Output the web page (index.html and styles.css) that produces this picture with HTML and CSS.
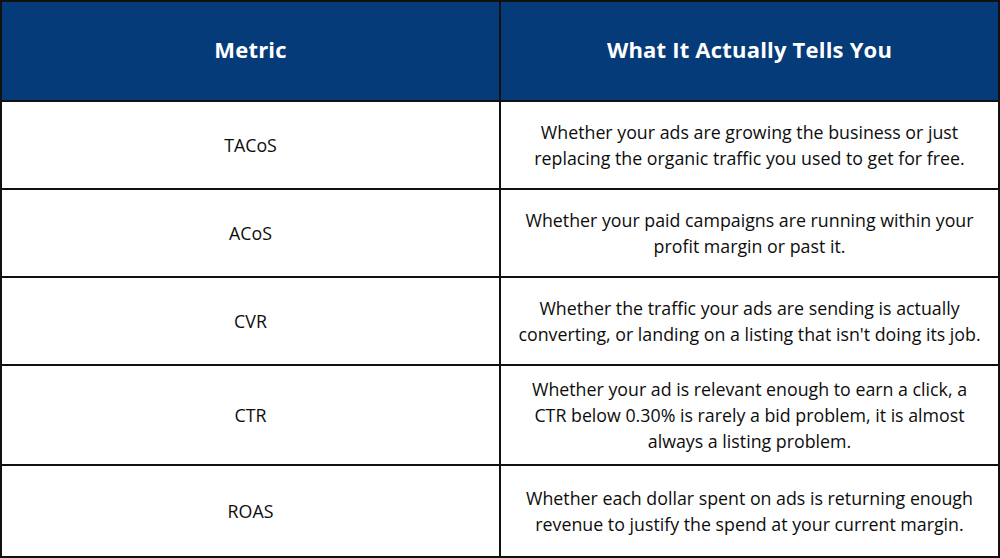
FILE: index.html
```html
<!DOCTYPE html>
<html>
<head>
<meta charset="utf-8">
<link rel="stylesheet" href="styles.css">
</head>
<body>
<table class="metrics">
  <thead>
    <tr class="head-row">
      <th class="col-metric">Metric</th>
      <th class="col-desc">What It Actually Tells You</th>
    </tr>
  </thead>
  <tbody>
    <tr class="row-a">
      <td>TACoS</td>
      <td>Whether your ads are growing the business or just<br>replacing the organic traffic you used to get for free.</td>
    </tr>
    <tr class="row-a">
      <td>ACoS</td>
      <td>Whether your paid campaigns are running within your<br>profit margin or past it.</td>
    </tr>
    <tr class="row-a">
      <td>CVR</td>
      <td>Whether the traffic your ads are sending is actually<br>converting, or landing on a listing that isn't doing its job.</td>
    </tr>
    <tr class="row-b">
      <td>CTR</td>
      <td>Whether your ad is relevant enough to earn a click, a<br>CTR below 0.30% is rarely a bid problem, it is almost<br>always a listing problem.</td>
    </tr>
    <tr class="row-c">
      <td>ROAS</td>
      <td>Whether each dollar spent on ads is returning enough<br>revenue to justify the spend at your current margin.</td>
    </tr>
  </tbody>
</table>
</body>
</html>
```
FILE: styles.css
```css
html, body {
  margin: 0;
  padding: 0;
  background: #ffffff;
}
.metrics {
  width: 1000px;
  height: 558px;
  border-collapse: collapse;
  table-layout: fixed;
  font-family: "Open Sans", "Liberation Sans", sans-serif;
  color: #0d0d0d;
}
.metrics th,
.metrics td {
  border: 2px solid #111111;
  text-align: center;
  vertical-align: middle;
  padding: 0;
}
.col-metric,
.col-desc {
  width: 50%;
}
.head-row {
  height: 100px;
}
.metrics th {
  background: #053b78;
  color: #ffffff;
  font-size: 22px;
  font-weight: 700;
  letter-spacing: 0.2px;
  padding-bottom: 4px;
}
.metrics td {
  font-size: 17.8px;
  line-height: 26px;
}
.row-a { height: 88px; }
.row-b { height: 100px; }
.row-c { height: 92px; }
```
